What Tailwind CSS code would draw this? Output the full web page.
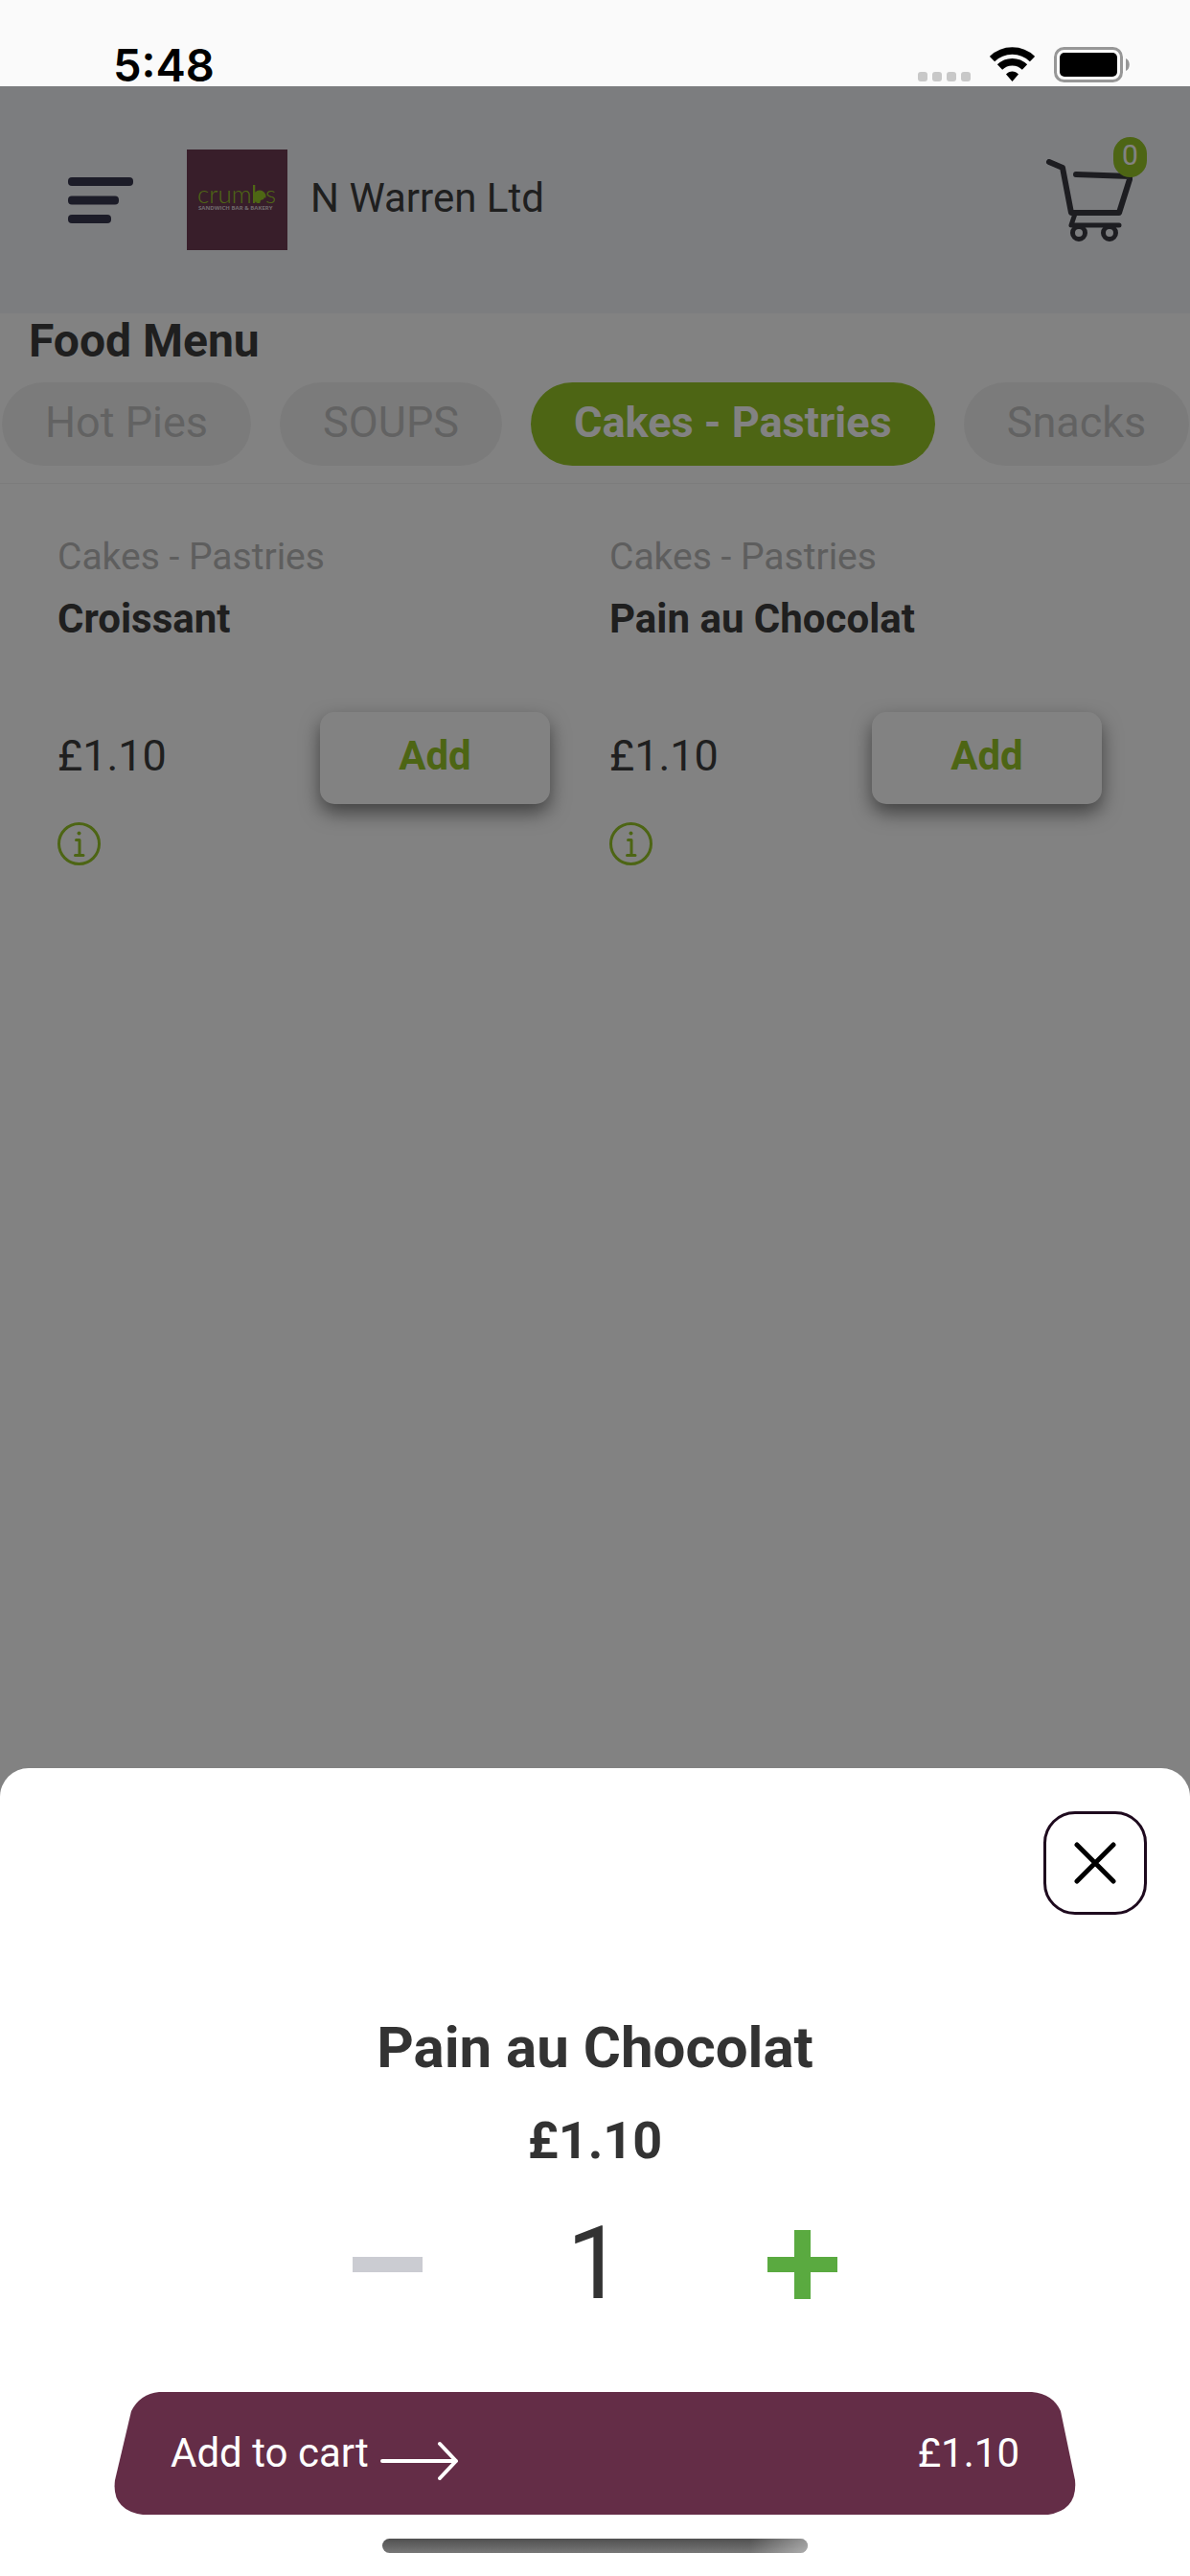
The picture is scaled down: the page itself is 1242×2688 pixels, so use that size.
<!DOCTYPE html>
<html lang="en">
<head>
    <meta charset="UTF-8">
    <meta name="viewport" content="width=device-width, initial-scale=1.0">
    <title>N Warren Ltd - Food Menu</title>
    <script src="https://cdn.jsdelivr.net/npm/@tailwindcss/browser@4"></script>
</head>
<body class="min-h-screen bg-white font-[Roboto,sans-serif] text-[#3d3d3d]">
    <!-- Status bar -->
    <div class="flex h-[90px] items-end justify-between bg-[#fafafa] pr-[63px] pl-[118px] text-black">
        <span class="pb-[5px] font-[Inter,sans-serif] text-[47px] leading-[34px] font-semibold">5:48</span>
        <div class="flex items-end gap-[20px] pb-[4px]">
            <svg width="55" height="11" viewBox="0 0 55 11" fill="#c8c8c8" aria-hidden="true">
                <rect x="0" width="10" height="10" rx="3"/>
                <rect x="15" width="10" height="10" rx="3"/>
                <rect x="30" width="10" height="10" rx="3"/>
                <rect x="45" width="10" height="10" rx="3"/>
            </svg>
            <svg width="47" height="37" viewBox="0 0 47 37" fill="none" stroke="#000" aria-hidden="true">
                <path d="M2.500 12.500a30 30 0 0 1 42 0" stroke-width="7.500"/>
                <path d="M10.500 21a18.500 18.500 0 0 1 26 0" stroke-width="7.500"/>
                <path d="M23.500 36l-6.500-7.500c3.500-4 9.500-4 13 0z" fill="#000" stroke="none"/>
            </svg>
            <svg width="79" height="37" viewBox="0 0 79 37" aria-hidden="true">
                <rect x="1.500" y="1.500" width="69" height="34" rx="9" fill="none" stroke="#979797" stroke-width="3"/>
                <rect x="6" y="6" width="60" height="25" rx="5"/>
                <path d="M75 12c5 2 5 11 0 13z" fill="#979797"/>
            </svg>
        </div>
    </div>

    <!-- Header -->
    <header class="flex h-[237px] items-center bg-[#f3f5f9] pr-[60px] pl-[71px]">
        <button type="button" aria-label="Open menu">
            <svg width="68" height="48" viewBox="0 0 68 48" fill="#38384f">
                <rect width="68" height="9" rx="4"/>
                <rect y="19.500" width="53" height="9" rx="4"/>
                <rect y="39" width="45" height="9" rx="4"/>
            </svg>
        </button>
        <svg class="ml-[56px]" width="105" height="105" viewBox="0 0 105 105" role="img" aria-label="Crumbs sandwich bar and bakery">
            <rect width="105" height="105" fill="#6f3b54"/>
            <text x="11" y="56" font-family="Lato, sans-serif" font-weight="300" font-size="26" fill="#9aca28">crumbs</text>
            <path d="M70 37v19" stroke="#9aca28" stroke-width="2"/>
            <circle cx="76" cy="49" r="6.500" fill="#9aca28"/>
            <path d="M76 57l1-4 3-1 1-2 3 2-2 4z" fill="#6f3b54"/>
            <text x="12" y="63" font-family="Open Sans, sans-serif" font-weight="700" font-size="6" fill="#d8ccd2">SANDWICH BAR &amp; BAKERY</text>
        </svg>
        <span class="pb-1 pl-[24px] text-[42px] leading-[50px]">N Warren Ltd</span>
        <button type="button" class="relative ml-auto" aria-label="Cart">
            <svg width="91" height="86" viewBox="0 0 91 86" fill="none" stroke="#3a3a42" stroke-width="6" stroke-linecap="round" stroke-linejoin="round">
                <path d="M4 3l14 6 9 47h50l12-38-57-2"/>
                <path d="M31 57l-4 12h50" stroke-width="5"/>
                <circle cx="35" cy="77" r="6.500" stroke-width="5"/>
                <circle cx="67" cy="77" r="6.500" stroke-width="5"/>
            </svg>
            <span class="absolute -top-[23px] left-[71px] flex h-[42px] w-[35px] items-center justify-center rounded-full bg-[#97c628] pb-1 text-[30px] text-white">0</span>
        </button>
    </header>

    <!-- Food menu -->
    <main>
        <h1 class="pt-px pl-[30px] text-[48px] leading-[56px] font-bold">Food Menu</h1>
        <nav class="mt-[15px] flex gap-[30px] overflow-hidden border-b border-[#f4f4f4] pb-[18px] pl-[2px] text-[45px] leading-[53px] whitespace-nowrap text-[#c1c1c1]">
            <a href="#" class="shrink-0 rounded-full bg-[#f2f2f2] px-[45px] pt-[15px] pb-[19px]">Hot Pies</a>
            <a href="#" class="shrink-0 rounded-full bg-[#f2f2f2] px-[45px] pt-[15px] pb-[19px]">SOUPS</a>
            <a href="#" class="shrink-0 rounded-full bg-[#97c628] px-[45px] pt-[15px] pb-[19px] font-bold text-white">Cakes - Pastries</a>
            <a href="#" class="shrink-0 rounded-full bg-[#f2f2f2] px-[45px] pt-[15px] pb-[19px]">Snacks</a>
        </nav>

        <section class="grid grid-cols-2 gap-x-[62px] pt-[53px] pr-[92px] pl-[60px]">
            <article>
                <p class="text-[39px] leading-[46px] text-[#b8b8b8]">Cakes - Pastries</p>
                <h2 class="mt-[17px] text-[42px] leading-[50px] font-bold">Croissant</h2>
                <div class="mt-[72px] flex items-center justify-between">
                    <span class="pb-[6px] text-[45px] leading-[53px]">£1.10</span>
                    <button type="button" class="h-[96px] w-[240px] rounded-[15px] bg-white pb-[6px] text-[42px] font-bold text-[#97c628] shadow-[0_9px_20px_rgba(0,0,0,0.5)]">Add</button>
                </div>
                <button type="button" class="mt-[19px] block" aria-label="About Croissant">
                    <svg width="45" height="45" viewBox="0 0 45 45" fill="none" stroke="#97c628" stroke-width="3" stroke-linecap="round" stroke-linejoin="round">
                        <circle cx="22.500" cy="22.500" r="21"/>
                        <path d="M19.500 18.500h3.500v16M18.500 34.500h8.500"/>
                        <circle cx="22.500" cy="11.500" r="2" fill="#97c628" stroke="none"/>
                    </svg>
                </button>
            </article>
            <article>
                <p class="text-[39px] leading-[46px] text-[#b8b8b8]">Cakes - Pastries</p>
                <h2 class="mt-[17px] text-[42px] leading-[50px] font-bold">Pain au Chocolat</h2>
                <div class="mt-[72px] flex items-center justify-between">
                    <span class="pb-[6px] text-[45px] leading-[53px]">£1.10</span>
                    <button type="button" class="h-[96px] w-[240px] rounded-[15px] bg-white pb-[6px] text-[42px] font-bold text-[#97c628] shadow-[0_9px_20px_rgba(0,0,0,0.5)]">Add</button>
                </div>
                <button type="button" class="mt-[19px] block" aria-label="About Pain au Chocolat">
                    <svg width="45" height="45" viewBox="0 0 45 45" fill="none" stroke="#97c628" stroke-width="3" stroke-linecap="round" stroke-linejoin="round">
                        <circle cx="22.500" cy="22.500" r="21"/>
                        <path d="M19.500 18.500h3.500v16M18.500 34.500h8.500"/>
                        <circle cx="22.500" cy="11.500" r="2" fill="#97c628" stroke="none"/>
                    </svg>
                </button>
            </article>
        </section>
    </main>

    <!-- Add to cart sheet -->
    <div class="fixed inset-x-0 top-[90px] bottom-0 flex flex-col justify-end bg-black/49">
        <div role="dialog" aria-label="Pain au Chocolat" class="flex flex-col items-center rounded-t-[30px] bg-white pt-[45px] pb-6 text-[#333333]">
            <button type="button" aria-label="Close" class="mr-[45px] flex size-[108px] items-center justify-center self-end rounded-[33px] border-3 border-[#1e0a1e]">
                <svg width="44" height="44" viewBox="0 0 44 44" fill="none" stroke="#000" stroke-width="5" stroke-linecap="round">
                    <path d="M3 3l38 38M41 3L3 41"/>
                </svg>
            </button>
            <h2 class="mt-[104px] text-[60px] leading-[70px] font-bold">Pain au Chocolat</h2>
            <p class="mt-[30px] text-[54px] leading-[64px] font-bold">£1.10</p>
            <div class="mt-9 flex items-center gap-[150px]">
                <button type="button" aria-label="Remove one">
                    <svg width="73" height="72" viewBox="0 0 73 72"><path d="M0 28h73v16H0z" fill="#cbccd2"/></svg>
                </button>
                <span class="text-[105px] leading-[122px]">1</span>
                <button type="button" aria-label="Add one">
                    <svg width="73" height="72" viewBox="0 0 73 72"><path d="M28 0h17v28h28v16H45v28H28V44H0V28h28z" fill="#5aaa40"/></svg>
                </button>
            </div>
            <div class="mt-[72px] w-full px-[119px]">
                <button type="button" class="relative flex h-[128px] w-full items-center px-[59px] text-[42px] leading-[50px] text-white">
                    <svg class="absolute inset-0 size-full" viewBox="0 0 1004 128" preserveAspectRatio="none" fill="#642d47">
                        <path d="M47 0H958Q980 2 988 20L1003 92Q1006 123 975 128H30Q-3 123 1 92L18 20Q27 2 47 0z"/>
                    </svg>
                    <span class="relative">Add to cart</span>
                    <svg class="relative ml-3" width="82" height="56" viewBox="0 0 82 56" fill="none" stroke="#fff" stroke-width="4" stroke-linecap="round" stroke-linejoin="round">
                        <path d="M2 36h77M62 18l17 18-17 18"/>
                    </svg>
                    <span class="relative ml-auto">£1.10</span>
                </button>
            </div>
            <div class="mt-[25px] h-[15px] w-[444px] rounded-full bg-linear-to-b from-[#505050] to-[#787878]">
                <div class="ml-auto h-full w-[60px] rounded-r-full bg-linear-to-r from-white/0 to-white/40"></div>
            </div>
        </div>
    </div>
</body>
</html>
